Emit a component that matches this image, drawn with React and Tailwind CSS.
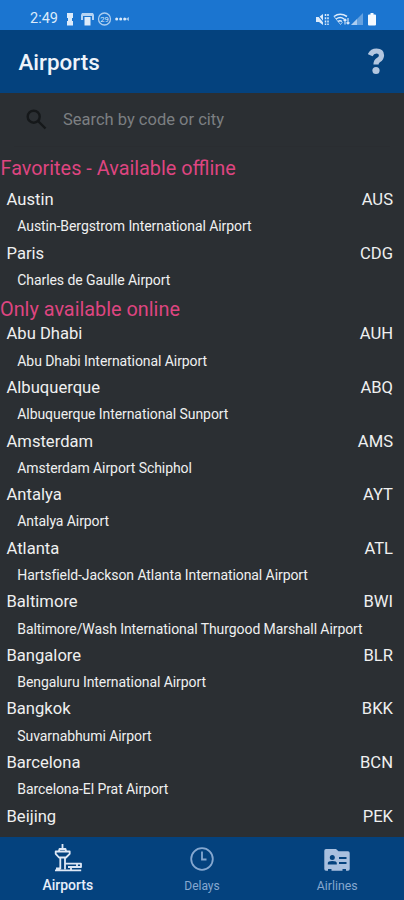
const favorites = [
  ['Austin', 'AUS', 'Austin-Bergstrom International Airport'],
  ['Paris', 'CDG', 'Charles de Gaulle Airport'],
];

const online = [
  ['Abu Dhabi', 'AUH', 'Abu Dhabi International Airport'],
  ['Albuquerque', 'ABQ', 'Albuquerque International Sunport'],
  ['Amsterdam', 'AMS', 'Amsterdam Airport Schiphol'],
  ['Antalya', 'AYT', 'Antalya Airport'],
  ['Atlanta', 'ATL', 'Hartsfield-Jackson Atlanta International Airport'],
  ['Baltimore', 'BWI', 'Baltimore/Wash International Thurgood Marshall Airport'],
  ['Bangalore', 'BLR', 'Bengaluru International Airport'],
  ['Bangkok', 'BKK', 'Suvarnabhumi Airport'],
  ['Barcelona', 'BCN', 'Barcelona-El Prat Airport'],
  ['Beijing', 'PEK', ''],
];

function Airport({ city, code, name }) {
  return (
    <li className="h-[53.6px] shrink-0 pl-[6.5px] pr-[11px] text-[#eff0f0]">
      <div className="flex h-[26.8px] items-center justify-between text-[16.6px]">
        <span>{city}</span>
        <span>{code}</span>
      </div>
      <div className="flex h-[26.8px] items-center whitespace-nowrap pb-px pl-[10.8px] text-[14px] tracking-[-0.075px]">
        {name}
      </div>
    </li>
  );
}

function StatusBar() {
  return (
    <div className="flex h-[30px] shrink-0 items-center bg-[#1b75d0] pl-[30px] pr-[28px] pt-[8px] text-[#dcebfb]">
      <span className="pt-px text-[14.5px] leading-none">2:49</span>
      <svg className="ml-[8px]" width="8" height="13" viewBox="0 0 8 13" fill="currentColor">
        <path d="M1 0h6v5H6v3h1v4.500H1V8h1V5H1z" />
      </svg>
      <svg className="ml-[7px]" width="13" height="13" viewBox="0 0 13 13" fill="currentColor">
        <path d="M1 0h11l1 2v5h-2V3H2v4H0V2z" opacity=".8" />
        <path d="M3.500 4h6v8.500h-6z" />
      </svg>
      <svg className="ml-[3px]" width="15" height="14" viewBox="0 0 15 14">
        <circle cx="7.500" cy="7" r="6" fill="none" stroke="currentColor" strokeWidth="1.300" opacity=".75" />
        <text x="7.500" y="9.800" textAnchor="middle" fontSize="7.500" fontFamily="Roboto, sans-serif" fill="currentColor">29</text>
      </svg>
      <svg className="ml-[3px]" width="15" height="5" viewBox="0 0 15 5" fill="currentColor">
        <circle cx="1.700" cy="2" r="1.500" />
        <circle cx="5.700" cy="2" r="1.500" />
        <circle cx="9.700" cy="2" r="1.500" />
        <path d="M10.500 2 14 0v4z" opacity=".65" />
      </svg>
      <svg className="ml-auto" width="13" height="13" viewBox="0 0 13 13">
        <path d="M0 4h3l4-3v11L3 9H0z" fill="currentColor" />
        <path d="m1 1 8 10" stroke="#1b75d0" strokeWidth="1.200" />
        <path d="M9.500 1v11M12 1v11" stroke="currentColor" strokeWidth="1.500" strokeDasharray="2 1.200" />
      </svg>
      <svg className="ml-[4px]" width="17" height="13" viewBox="0 0 17 13" fill="none" stroke="currentColor">
        <path d="M1 3.500q6-4.500 13 0M3 6q4.500-3 8 0M5 8.500q2-1.500 4 0" strokeWidth="1.500" />
        <path d="m1 3.500 6.500 8 2-2.500" strokeWidth="1" opacity=".7" />
        <path d="M12 11.500V6m-1.500 1.500L12 6l1.500 1.500M15 5v6m-1.500-1.500L15 11l1.500-1.500" strokeWidth="1.100" />
      </svg>
      <svg className="ml-[1px]" width="12" height="12" viewBox="0 0 12 12" fill="currentColor">
        <path d="M0 12 12 0v12z" opacity=".38" />
        <path d="m0 12 6-6v6z" opacity=".6" />
      </svg>
      <svg className="ml-[5px]" width="8" height="13" viewBox="0 0 8 13" fill="#f3f9ff">
        <path d="M2.500 0h3v1.500h1.500q1 0 1 1v9q0 1-1 1H1q-1 0-1-1v-9q0-1 1-1h1.500z" />
      </svg>
    </div>
  );
}

function TowerIcon() {
  return (
    <svg width="28" height="28" viewBox="0 0 28 28" fill="none" stroke="#dfe8f5" strokeWidth="1.800" strokeLinejoin="round">
      <path d="M8.500 0v5M4.800 7.500 5.500 5h6l.7 2.500M1.700 7.500h14v2.300L12 13.500H5L1.700 9.800zM6.300 13v12.500M11 13v12.500" />
      <path d="M1 26.300h26.200M2 24.500h4M11 19.700h16v3.300H14M17 23v2.500M23 20v3" />
    </svg>
  );
}

function ClockIcon() {
  return (
    <svg width="24" height="24" viewBox="0 0 24 24" fill="none" stroke="#86a8d0" strokeWidth="1.800">
      <circle cx="12" cy="12" r="10.800" />
      <path d="M12 4.500v8h4.500" />
    </svg>
  );
}

function AirlinesIcon() {
  return (
    <svg width="26" height="23" viewBox="0 0 26 23">
      <path d="M2 0h10l2.500 2.300H24q1.700 0 1.700 1.700v16q0 1.700-1.700 1.700h-2V20h-3.500v1.700h-11V20H4v1.700H2Q.3 21.700.3 20V1.700Q.3 0 2 0z" fill="#a9c0df" />
      <g fill="#04427e">
        <circle cx="8.300" cy="8.500" r="2.500" />
        <path d="M3.800 15.500V14q0-2 4.500-2t4.500 2v1.500zM15 8h7.500v2H15zM15 13h7.500v2H15z" />
      </g>
    </svg>
  );
}

export default function App() {
  return (
    <div className="flex h-[900px] w-[404px] flex-col overflow-hidden bg-[#2b2f33] font-['Roboto',sans-serif]">
      <StatusBar />
      <header className="flex h-[63px] shrink-0 items-center justify-between bg-[#04427e] pl-[18.5px] pr-[19px] pt-px">
        <h1 className="text-[22.4px] font-medium leading-none text-[#eef3fa]">Airports</h1>
        <svg className="mb-[2px]" width="17" height="27" viewBox="0 0 17 27">
          <path d="M2.200 7.200Q4 3 8.500 3q5 0 5 4.200 0 3-3 4.800-2.500 1.600-2.500 4.500" fill="none" stroke="#b3c6df" strokeWidth="5.200" />
          <circle cx="8" cy="22.500" r="3.600" fill="#b3c6df" />
        </svg>
      </header>
      <label className="mx-[14px] flex h-[54px] shrink-0 items-center border-b border-[#2a2d31] pl-[12px]">
        <svg width="21" height="21" viewBox="0 0 21 21" fill="none" stroke="#15181a" strokeWidth="2.400">
          <circle cx="7.700" cy="7.700" r="6" />
          <path d="m12 12 7.500 7.500" />
        </svg>
        <span className="ml-[16px] pt-[2px] text-[16.5px] text-[#7c7f82]">Search by code or city</span>
      </label>
      <main className="flex min-h-0 flex-1 flex-col overflow-hidden pt-[9px]">
        <h2 className="flex h-[31px] shrink-0 items-center pb-[6px] pl-[0.5px] text-[19.85px] text-[#de4580]">Favorites - Available offline</h2>
        <ul>
          {favorites.map(([city, code, name]) => (
            <Airport key={code} city={city} code={code} name={name} />
          ))}
        </ul>
        <h2 className="flex h-[27.200px] shrink-0 items-center pt-[5px] text-[19.85px] text-[#de4580]">Only available online</h2>
        <ul>
          {online.map(([city, code, name]) => (
            <Airport key={code} city={city} code={code} name={name} />
          ))}
        </ul>
      </main>
      <nav className="grid h-[63px] shrink-0 grid-cols-3 bg-[#04427e] text-[12px] leading-none text-[#86a8d0]">
        <div className="flex flex-col items-center pl-px pt-[7px]">
          <TowerIcon />
          <span className="mt-[6px] text-[14px] font-medium text-[#e6eefa]">Airports</span>
        </div>
        <div className="flex flex-col items-center pt-[10px]">
          <ClockIcon />
          <span className="mt-[9px]">Delays</span>
        </div>
        <div className="flex flex-col items-center pl-px pt-[12px]">
          <AirlinesIcon />
          <span className="mt-[8px] text-[12.3px]">Airlines</span>
        </div>
      </nav>
    </div>
  );
}
